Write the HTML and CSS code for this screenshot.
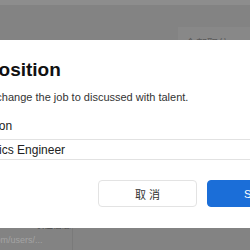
FILE: index.html
```html
<!DOCTYPE html>
<html lang="en">
<head>
    <meta charset="UTF-8">
    <meta name="viewport" content="width=device-width, initial-scale=1.0">
    <title>Change position</title>
    <link rel="stylesheet" href="styles.css">
</head>
<body>
    <div class="page">
        <div class="topbar"></div>
        <div class="filters">
            <div class="filter-tab">全部职位</div>
        </div>
        <div class="list">
            <div class="list-side">
                <div class="list-name">职位信息</div>
                <div class="list-link">github.com/users/...</div>
            </div>
            <div class="list-main"></div>
        </div>
    </div>

    <div class="modal">
        <h2 class="modal-title">Change position</h2>
        <p class="modal-desc">Please review or change the job to discussed with talent.</p>

        <label class="field-label" for="position">Discussed position</label>
        <input class="field-input" type="text" id="position" value="Senior Robotics Engineer">

        <div class="modal-footer">
            <button class="btn">取 消</button>
            <button class="btn btn-primary">Save</button>
        </div>
    </div>
</body>
</html>
```

FILE: styles.css
```css
body {
    margin: 0;
    width: 250px;
    height: 250px;
    overflow: hidden;
    position: relative;
    background-color: #838383;
    font-family: "Liberation Sans", "Noto Sans CJK SC", sans-serif;
}
.topbar {
    height: 5px;
    background-color: #8d8d8d;
}
.filters {
    display: flex;
    padding-top: 22px;
    padding-left: 178px;
    height: 30px;
}
.filter-tab {
    flex: 1;
    background-color: #888;
    padding: 8px 7px;
    font-size: 11px;
    color: #5a5a5a;
}
.list {
    display: flex;
    margin-top: 162px;
    height: 40px;
}
.list-side {
    width: 72px;
    border-right: 1px solid #7a7a7a;
    font-size: 9px;
    line-height: 12px;
    overflow: hidden;
    white-space: nowrap;
}
.list-name {
    padding-left: 35px;
    color: #4a4a4a;
}
.list-link {
    margin-top: 3px;
    margin-left: -36px;
    color: #a3a3a3;
}
.modal {
    position: absolute;
    top: 40px;
    left: -112px;
    width: 442px;
    box-sizing: border-box;
    padding: 18px 24px 21px;
    background-color: #fff;
    border-radius: 8px;
}
.modal-title {
    margin: 0;
    font-size: 19px;
    line-height: 24px;
    font-weight: bold;
    color: #111;
}
.modal-desc {
    margin: 7px 0 0;
    font-size: 11px;
    line-height: 16px;
    color: #333;
    white-space: nowrap;
}
.field-label {
    display: block;
    margin-top: 13px;
    font-size: 12px;
    line-height: 16px;
    color: #222;
}
.field-input {
    display: block;
    width: 100%;
    box-sizing: border-box;
    margin-top: 5px;
    height: 21px;
    padding: 0 16px;
    border: 1px solid #e2e2e2;
    border-radius: 3px;
    font-family: inherit;
    font-size: 12px;
    color: #222;
    outline: none;
}
.modal-footer {
    display: flex;
    justify-content: flex-end;
    gap: 10px;
    margin-top: 20px;
}
.btn {
    width: 99px;
    height: 27px;
    border: 1px solid #e3e3e3;
    border-radius: 4px;
    background-color: #fff;
    font-family: inherit;
    font-size: 11px;
    color: #333;
    cursor: pointer;
}
.btn-primary {
    border-color: #1b6ed8;
    background-color: #1b6ed8;
    color: #fff;
}
```
